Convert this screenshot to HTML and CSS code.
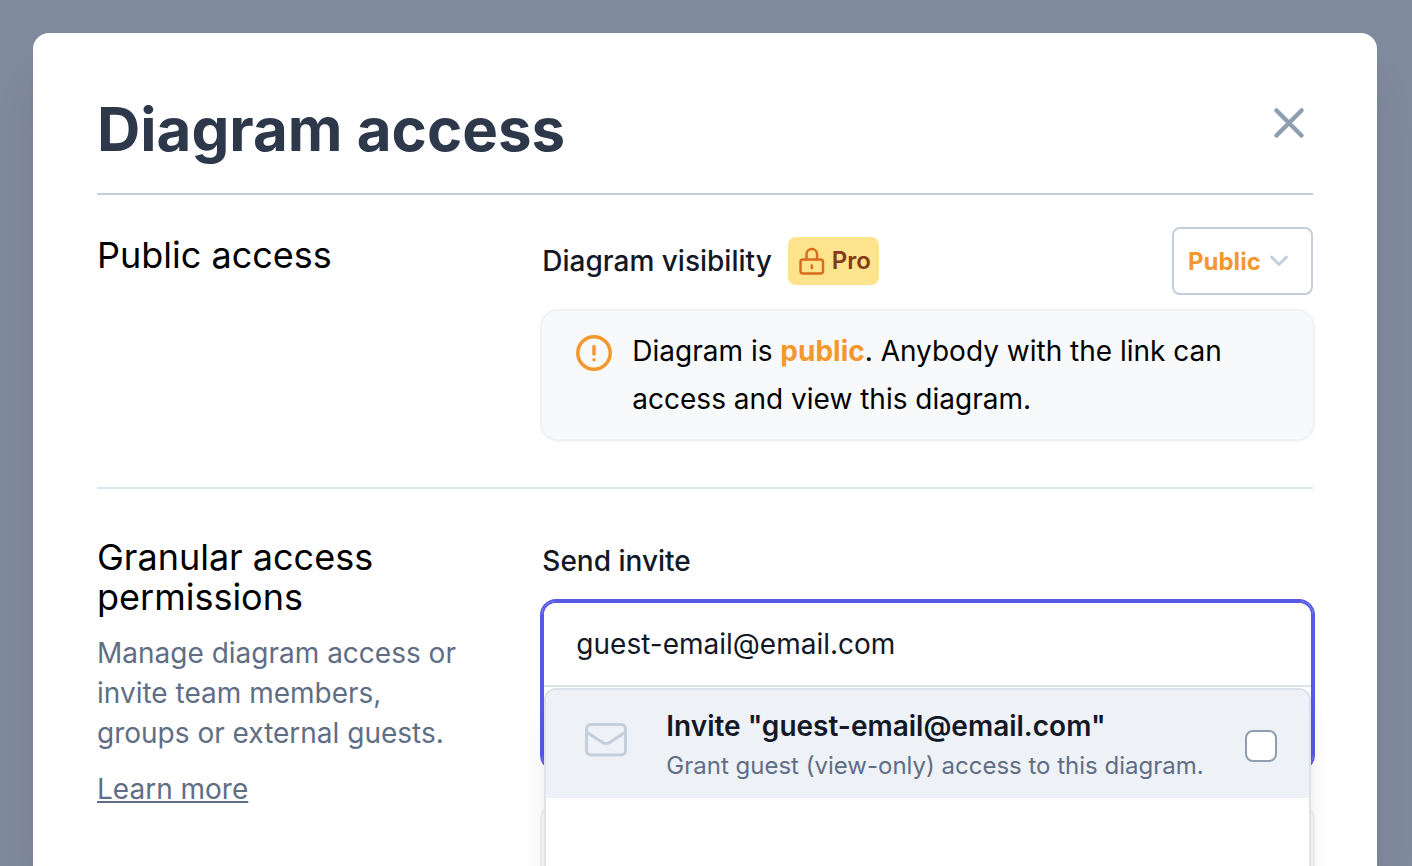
FILE: index.html
```html
<!DOCTYPE html>
<html lang="en">
<head>
    <meta charset="UTF-8">
    <meta name="viewport" content="width=device-width, initial-scale=1.0">
    <title>Diagram access</title>
    <link rel="stylesheet" href="styles.css">
</head>
<body>

    <div class="modal" role="dialog" aria-labelledby="modalTitle">

        <!-- Header -->
        <header class="modal-header">
            <h1 id="modalTitle">Diagram access</h1>
            <button class="close" type="button" aria-label="Close">
                <svg viewBox="0 0 48 48" width="48" height="48">
                    <path d="M11.5 11.5l25 25M36.5 11.5l-25 25"/>
                </svg>
            </button>
        </header>

        <!-- Public access -->
        <section class="section section-public">
            <div class="section-info">
                <h2>Public access</h2>
            </div>
            <div class="section-content">
                <div class="visibility">
                    <label class="label" for="visibility">Diagram visibility</label>
                    <span class="badge">
                        <svg viewBox="0 0 28 28" width="28" height="28">
                            <path d="M8.5 12.5V7.300a5.300 5.300 0 0 1 10.600 0v5.200"/>
                            <rect x="2.500" y="12.500" width="22.500" height="14" rx="2.500"/>
                            <path d="M13.800 18.500v2.500"/>
                        </svg>
                        Pro
                    </span>
                    <div class="select">
                        <select id="visibility">
                            <option>Public</option>
                        </select>
                        <svg viewBox="0 0 20 12" width="20" height="12">
                            <path d="M2.500 2l7.500 7.500L17.500 2"/>
                        </svg>
                    </div>
                </div>
                <div class="notice">
                    <svg viewBox="0 0 36 36" width="36" height="36">
                        <circle cx="18" cy="18" r="16.200"/>
                        <path d="M18 11.500v7.500M18 24.800v.01"/>
                    </svg>
                    <p>Diagram is <strong>public</strong>. Anybody with the link can access and view this diagram.</p>
                </div>
            </div>
        </section>

        <!-- Granular permissions -->
        <section class="section section-granular">
            <div class="section-info">
                <h2>Granular access permissions</h2>
                <p>Manage diagram access or invite team members, groups or external guests.</p>
                <a href="#learn-more">Learn more</a>
            </div>
            <div class="section-content">
                <label class="label" for="invite">Send invite</label>
                <div class="combobox">
                    <input id="invite" type="text" value="guest-email@email.com">
                    <div class="dropdown">
                        <label class="option" for="inviteGuest">
                            <svg viewBox="0 0 48 48" width="48" height="48">
                                <rect x="4.500" y="8.500" width="39" height="30.500" rx="4.500"/>
                                <path d="M5 16.500l16 10.200q3 1.800 6 0L43 16.500"/>
                            </svg>
                            <span class="option-text">
                                <strong>Invite "guest-email@email.com"</strong>
                                <small>Grant guest (view-only) access to this diagram.</small>
                            </span>
                            <input id="inviteGuest" type="checkbox">
                        </label>
                    </div>
                </div>
                <div class="members"></div>
            </div>
        </section>

    </div>

</body>
</html>
```

FILE: styles.css
```css
/* General Styles */
* {
    margin: 0;
    padding: 0;
    box-sizing: border-box;
    font-family: Inter, "Liberation Sans", sans-serif;
}
html {
    height: 100%;
    overflow: hidden;
}
body {
    height: 100%;
    overflow: hidden;
    padding: 33px 35px 0 33px;
    background-color: #7f8a9c;
    color: #000;
    font-size: 28px;
    line-height: 40px;
}
svg {
    display: block;
    flex-shrink: 0;
    fill: none;
    stroke: currentColor;
    stroke-width: 3;
    stroke-linecap: round;
    stroke-linejoin: round;
}

/* Modal */
.modal {
    height: 100%;
    overflow: hidden;
    padding: 64px 64px 0;
    background: #fff;
    border-radius: 16px 16px 0 0;
    box-shadow: 0 40px 50px -10px rgba(0, 0, 0, 0.1), 0 20px 20px -10px rgba(0, 0, 0, 0.04);
}
.modal-header {
    display: flex;
    justify-content: space-between;
    align-items: flex-start;
    padding-bottom: 32px;
    border-bottom: 2px solid #c3cfdc;
}
.modal-header h1 {
    color: #2d384b;
    font-size: 60px;
    line-height: 64px;
    font-weight: 700;
}
.close {
    margin: 2px 0;
    border: none;
    background: none;
    color: #8f9db1;
    cursor: pointer;
}
.close svg {
    stroke-width: 4.5;
}

/* Sections */
.section {
    display: grid;
    grid-template-columns: minmax(0, 1fr) minmax(0, 2fr);
    gap: 60px;
}
.section-public {
    padding: 32px 0 48px;
    border-bottom: 2px solid #dee4ec;
}
.section-public .section-info {
    padding-top: 8px;
}
.section-granular {
    padding: 48px 0;
}
.section-info {
    padding-right: 16px;
}
.section-info h2 {
    font-size: 36px;
    line-height: 40px;
    font-weight: 400;
}
.section-info p {
    margin: 16px 0;
    color: #5f6e85;
}
.section-info a {
    color: #5f6e85;
}
.label {
    color: #121826;
    font-weight: 500;
    line-height: 48px;
}

/* Visibility row */
.visibility {
    display: flex;
    align-items: center;
    gap: 16px;
}
.badge {
    display: flex;
    align-items: center;
    gap: 6px;
    height: 48px;
    padding: 0 8px 0 10px;
    border-radius: 8px;
    background: #fde38b;
    color: #853a15;
    font-size: 24px;
    font-weight: 600;
}
.badge svg {
    color: #d66d1f;
    stroke-width: 2.5;
}
.select {
    position: relative;
    margin-left: auto;
}
.select select {
    display: block;
    height: 68px;
    padding: 0 50px 0 14px;
    appearance: none;
    border: 2px solid #c3cfdc;
    border-radius: 8px;
    background: #fff;
    color: #f3982f;
    font-size: 24px;
    font-weight: 700;
}
.select svg {
    position: absolute;
    top: 28px;
    right: 24px;
    color: #c3cfdc;
    pointer-events: none;
}

/* Notice */
.notice {
    display: flex;
    gap: 20px;
    margin-top: 16px;
    padding: 16px 34px;
    border-radius: 16px;
    background: #f8f9fb;
    box-shadow: 0 0 0 2px #f0f1f3, 0 2px 4px rgba(0, 0, 0, 0.06);
}
.notice svg {
    margin-top: 8px;
    color: #f3982f;
    stroke-width: 3.5;
}
.notice p {
    line-height: 48px;
}
.notice strong {
    color: #f3982f;
    font-weight: 700;
}

/* Invite field */
.combobox {
    position: relative;
    height: 168px;
    margin-top: 16px;
    border: 2px solid #575ae6;
    border-radius: 14px;
    box-shadow: 0 0 0 2px #575ae6;
}
.combobox input[type="text"] {
    display: block;
    width: 100%;
    height: 84px;
    padding: 0 32px;
    border: none;
    border-bottom: 2px solid #dee4ec;
    border-radius: 12px 12px 0 0;
    outline: none;
    background: #fff;
    color: #121826;
    font-size: 28px;
}
.dropdown {
    position: absolute;
    top: 85px;
    left: 0;
    right: 0;
    height: 400px;
    overflow: hidden;
    border: 2px solid #dbe2ea;
    border-radius: 12px;
    background: #fff;
    box-shadow: 0 20px 30px -6px rgba(0, 0, 0, 0.1), 0 8px 12px -4px rgba(0, 0, 0, 0.05);
}
.option {
    display: flex;
    align-items: flex-start;
    gap: 36px;
    padding: 16px 32px 12px 36px;
    background: #eef1f6;
    cursor: pointer;
}
.option svg {
    margin-top: 10px;
    color: #c3cfdb;
}
.option-text {
    flex: 1;
}
.option-text strong,
.option-text small {
    display: block;
    white-space: nowrap;
}
.option-text strong {
    color: #121826;
    font-weight: 600;
}
.option-text small {
    color: #5f6e85;
    font-size: 24px;
}
.option input {
    width: 32px;
    height: 32px;
    margin-top: 24px;
    appearance: none;
    border: 2px solid #8f9db1;
    border-radius: 8px;
    background: #fff;
}

/* Members list */
.members {
    height: 200px;
    margin-top: 36px;
    border-radius: 14px;
    background: #f8f9fb;
    box-shadow: 0 0 0 2px #f0f1f3;
}
```
